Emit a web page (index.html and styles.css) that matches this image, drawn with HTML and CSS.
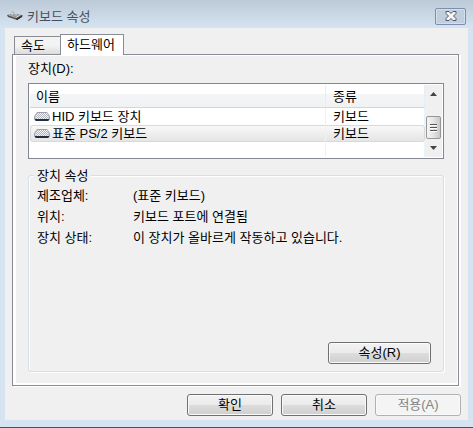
FILE: index.html
```html
<!DOCTYPE html>
<html lang="ko">
<head>
    <meta charset="UTF-8">
    <meta name="viewport" content="width=device-width, initial-scale=1.0">
    <title>키보드 속성</title>
    <link rel="stylesheet" href="styles.css">
</head>
<body>
    <svg width="0" height="0" class="defs" aria-hidden="true">
        <defs>
            <pattern id="keys" width="2" height="2" patternUnits="userSpaceOnUse">
                <rect width="2" height="2" fill="#f4f4f4"/>
                <rect width="1" height="1" fill="#b4b4b8"/>
                <rect x="1" y="1" width="1" height="1" fill="#b4b4b8"/>
            </pattern>
            <symbol id="keyboard" viewBox="0 0 16 10">
                <path d="M3 .5h10l2.500 4v3l-1 1h-13l-1-1v-3z" fill="#c9cfda" stroke="#9aa1b2"/>
                <path d="M3 1h10l1 2v4H2V3z" fill="url(#keys)"/>
                <path d="M1 7h14v1l-1 1H2L1 8z" fill="#1d2f48"/>
            </symbol>
        </defs>
    </svg>

    <main class="dialog">
        <header class="titlebar">
            <svg class="title-icon" width="16" height="10" viewBox="0 0 16 10" aria-hidden="true">
                <path d="M0 4l4-1 11 1 1 1-6 4-9-3z" fill="#555"/>
                <path d="M1 4l3-1 10 1-5 3z" fill="#dedede"/>
                <path d="M3 4h2M6 4h2M10 4h2M5 5h2M8 5h2M7 6h2" stroke="#777"/>
                <path d="M9 8l6-3v1l-5 3z" fill="#222"/>
                <path d="M7 3V1H4" fill="none" stroke="#a8b3bf"/>
            </svg>
            <h1>키보드 속성</h1>
            <button class="close" type="button" aria-label="닫기">
                <svg width="12" height="10" viewBox="0 0 12 10">
                    <path d="M1 .5h3l2 2 2-2h3v2L8.500 5 11 7.500v2H8l-2-2-2 2H1v-2L3.500 5 1 2.500z" fill="#f5f5f5" stroke="#535666"/>
                </svg>
            </button>
        </header>

        <div class="content">
            <div class="tabs" role="tablist">
                <button class="tab" type="button" role="tab" aria-selected="false">속도</button>
                <button class="tab active" type="button" role="tab" aria-selected="true">하드웨어</button>
            </div>

            <section class="panel" role="tabpanel">
                <h2 id="devices-label">장치(D):</h2>
                <div class="device-list">
                    <table class="devices" aria-labelledby="devices-label">
                        <thead>
                            <tr><th>이름</th><th class="kind">종류</th></tr>
                        </thead>
                        <tbody>
                            <tr>
                                <td><svg class="device-icon" width="16" height="10"><use href="#keyboard"/></svg>HID 키보드 장치</td>
                                <td class="kind">키보드</td>
                            </tr>
                            <tr class="selected">
                                <td><svg class="device-icon" width="16" height="10"><use href="#keyboard"/></svg>표준 PS/2 키보드</td>
                                <td class="kind">키보드</td>
                            </tr>
                            <tr class="empty">
                                <td></td>
                                <td class="kind"></td>
                            </tr>
                        </tbody>
                    </table>
                    <div class="scrollbar">
                        <button class="arrow" type="button" aria-label="위로">
                            <svg width="7" height="4" viewBox="0 0 7 4"><path d="M0 4l3.500-4L7 4z" fill="#444"/></svg>
                        </button>
                        <div class="thumb">
                            <svg width="7" height="9" viewBox="0 0 7 9"><path d="M0 1.500h7M0 4.500h7M0 7.500h7" stroke="#555"/><path d="M0 2.500h7M0 5.500h7M0 8.500h7" stroke="#fff"/></svg>
                        </div>
                        <button class="arrow" type="button" aria-label="아래로">
                            <svg width="7" height="4" viewBox="0 0 7 4"><path d="M0 0h7L3.500 4z" fill="#444"/></svg>
                        </button>
                    </div>
                </div>

                <fieldset class="properties">
                    <legend>장치 속성</legend>
                    <dl>
                        <dt>제조업체:</dt>
                        <dd>(표준 키보드)</dd>
                        <dt>위치:</dt>
                        <dd>키보드 포트에 연결됨</dd>
                        <dt>장치 상태:</dt>
                        <dd>이 장치가 올바르게 작동하고 있습니다.</dd>
                    </dl>
                    <button class="btn wide" type="button">속성(R)</button>
                </fieldset>
            </section>

            <footer class="actions">
                <button class="btn" type="button">확인</button>
                <button class="btn" type="button">취소</button>
                <button class="btn" type="button" disabled>적용(A)</button>
            </footer>
        </div>
    </main>
</body>
</html>
```
FILE: styles.css
```css
* {
    box-sizing: border-box;
}

body {
    margin: 0;
    font-family: 'Liberation Sans', 'Noto Sans CJK KR', sans-serif;
    font-size: 13px;
    line-height: 17px;
    color: #000;
    background: #d6e4f2;
}

button {
    font: inherit;
    color: inherit;
    padding: 0;
}

h1, h2, dl, dd {
    margin: 0;
    font-size: 13px;
    font-weight: normal;
}

.defs {
    position: absolute;
}

.dialog {
    display: flex;
    flex-direction: column;
    min-height: 100vh;
    padding: 0 5px 7px;
    border-bottom: 1px solid #4b5158;
    background: linear-gradient(#bccad8, #d6e4f2 28px);
}

/* title bar */
.titlebar {
    display: flex;
    align-items: center;
    height: 28px;
    padding: 4px 2px 0;
    color: #46505c;
}

.titlebar h1 {
    flex: 1;
    margin-left: 4px;
}

.close {
    display: flex;
    align-items: center;
    justify-content: center;
    width: 31px;
    height: 17px;
    border: 1px solid #7d8eaf;
    border-radius: 2px;
    background: #c1cedd;
    box-shadow: inset 0 0 0 1px #d3dfec;
}

.content {
    flex: 1;
    padding: 6px 7px 4px;
    background: #f0f0f0;
}

/* tabs */
.tabs {
    display: flex;
    align-items: flex-end;
    padding-left: 2px;
}

.tab {
    width: 46px;
    height: 18px;
    padding-left: 6px;
    border: 1px solid #898c95;
    border-width: 1px 0 0 1px;
    background: linear-gradient(#f3f3f3 50%, #dcdcdc);
    text-align: left;
}

.tab.active {
    position: relative;
    width: 64px;
    height: 21px;
    margin-bottom: -1px;
    padding-bottom: 2px;
    border-right-width: 1px;
    background: #fff;
}

.panel {
    margin-right: 2px;
    padding: 5px 14px 13px 12px;
    border: 1px solid #898c95;
    background: #f0f0f0;
    box-shadow: inset 3px 1px #fff, inset -1px -2px #fff, 2px 1px #fff;
}

.panel h2 {
    padding-left: 3px;
}

/* device list */
.device-list {
    display: flex;
    height: 76px;
    margin: 6px 0 8px 3px;
    padding: 1px;
    border: 1px solid #828790;
    background: #fff;
}

.devices {
    flex: 1;
    border-collapse: separate;
    border-spacing: 0;
    table-layout: fixed;
}

.devices th {
    height: 23px;
    padding: 0 0 0 6px;
    border-bottom: 1px solid #d5d5d5;
    border-right: 1px solid #e6edf5;
    font-weight: normal;
    text-align: left;
    background: linear-gradient(#fff 40%, #f4f5f7 40%, #f1f2f4);
}

.devices td {
    height: 17px;
    padding: 0 0 0 4px;
    border-right: 1px solid #eaf2fb;
    white-space: nowrap;
    line-height: 16px;
}

.devices th.kind,
.devices td.kind {
    width: 99px;
    padding-left: 7px;
}

.devices .selected td {
    border-top: 1px solid #d9d9d9;
    border-bottom: 1px solid #d9d9d9;
    background: linear-gradient(#f8f8f8, #e5e5e5);
    line-height: 15px;
}

.devices .selected td:first-child {
    border-left: 1px solid #d9d9d9;
    border-radius: 3px 0 0 3px;
    padding-left: 3px;
}

.devices .selected .kind {
    border-right-color: #d9d9d9;
    border-radius: 0 3px 3px 0;
}

.devices .empty td {
    height: 15px;
}

.device-icon {
    margin-right: 2px;
    vertical-align: -1px;
}

.scrollbar {
    display: flex;
    flex-direction: column;
    width: 17px;
    background: #f0f0f0;
}

.arrow {
    display: flex;
    flex: none;
    align-items: center;
    justify-content: center;
    height: 18px;
    border: 0;
    background: none;
}

.thumb {
    display: flex;
    align-items: center;
    justify-content: center;
    width: 15px;
    height: 23px;
    margin: auto 1px 0;
    border: 1px solid #979797;
    border-radius: 2px;
    background: linear-gradient(90deg, #f5f5f5, #e3e3e3 50%, #c8c8c8);
}

/* device properties */
.properties {
    display: flex;
    flex-direction: column;
    height: 205px;
    margin: 0 0 0 3px;
    padding: 3px 12px 7px 8px;
    border: 1px solid #d5dfe5;
    border-radius: 3px;
    box-shadow: inset 1px 1px #fff, 1px 1px #fff;
}

.properties legend {
    margin-left: -3px;
    padding: 0 3px;
    background: #f0f0f0;
}

.properties dl {
    display: grid;
    grid-template-columns: 96px 1fr;
    row-gap: 4px;
}

/* buttons */
.btn {
    width: 86px;
    height: 22px;
    padding-bottom: 2px;
    border: 1px solid #707070;
    border-radius: 3px;
    background: linear-gradient(#f2f2f2, #ebebeb 50%, #dddddd 50%, #cfcfcf);
    box-shadow: inset 0 0 0 1px #fafafa;
}

.btn:disabled {
    border-color: #adb2b5;
    background: #f4f4f4;
    color: #838383;
}

.btn.wide {
    width: 103px;
    margin: auto 0 0 auto;
}

.actions {
    display: flex;
    justify-content: flex-end;
    gap: 8px;
    margin-top: 8px;
}
```
